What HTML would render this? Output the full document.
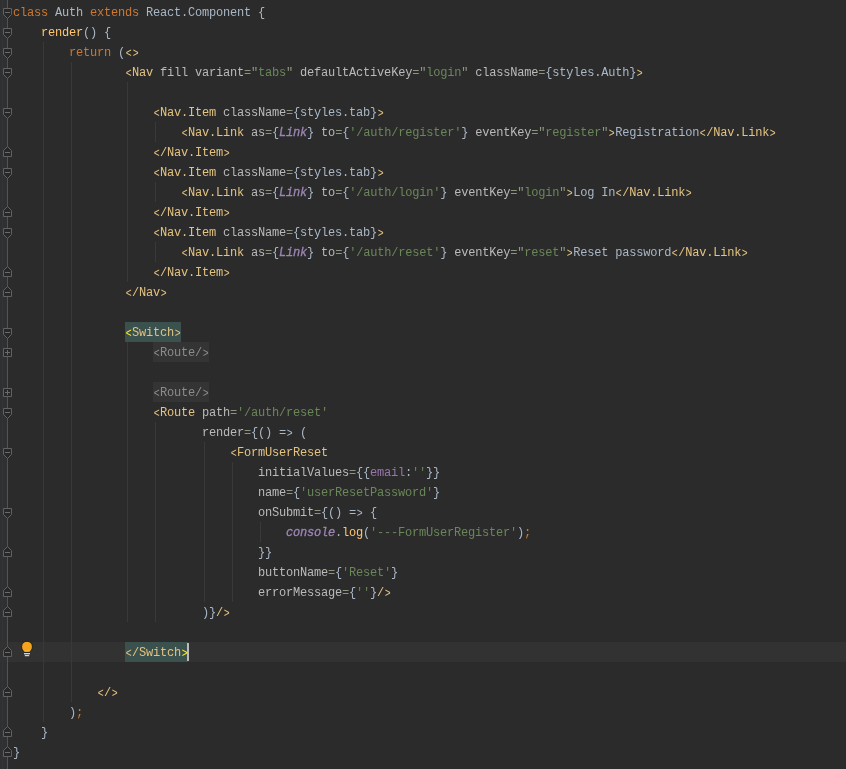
<!DOCTYPE html>
<html><head><meta charset="utf-8">
<style>
html,body{margin:0;padding:0;}
body{width:846px;height:769px;overflow:hidden;background:#2b2b2b;position:relative;font-family:"Liberation Mono",monospace;}
.l{position:absolute;height:20px;line-height:22px;will-change:transform;white-space:pre;font-size:12px;letter-spacing:-0.2px;color:#a9b7c6;z-index:5;}
.ab{font-style:normal;display:inline-block;transform:translateY(1px) scale(0.82,1.08)}
.k{color:#cc7832}
.t{color:#e4c380}
.a{color:#bababa}
.s{color:#6a8759}
.p{color:#a9b7c6}
.f{color:#ffc66d}
.v{color:#9d86b6;font-style:italic;-webkit-text-stroke:0.3px}
.e{color:#9876aa}
.q{color:#8c967f}
.dq{color:#8f9a80}
.sw{color:#e4c380}
.sw1{color:#ffef28}
.rt{color:#8c8c8c}
.hl{position:absolute;height:20px;z-index:3}
.g{position:absolute;width:1px;background:#393939;z-index:2}
.curline{position:absolute;left:0;top:642px;width:846px;height:20px;background:#323232;z-index:1}
.foldline{position:absolute;left:7px;top:0;width:1px;height:769px;background:#535353;z-index:3}
.gutbg{position:absolute;left:0;top:0;width:7px;height:769px;background:#2f3031;z-index:0}
.gutl{position:absolute;left:2px;top:0;width:1px;height:769px;background:#333435;z-index:0}
.fm{position:absolute;left:0;z-index:4}
.caret{position:absolute;left:187px;top:643px;width:2px;height:18px;background:#bbbbbb;z-index:6}
.bulb{position:absolute;left:19px;top:639px;z-index:6}
</style></head><body>
<div class="curline"></div>
<div class="gutbg"></div><div class="gutl"></div>
<div class="foldline"></div>
<div class="g" style="left:43px;top:42px;height:680px"></div>
<div class="g" style="left:71px;top:62px;height:640px"></div>
<div class="g" style="left:127px;top:82px;height:200px"></div>
<div class="g" style="left:127px;top:342px;height:280px"></div>
<div class="g" style="left:155px;top:122px;height:20px"></div>
<div class="g" style="left:155px;top:182px;height:20px"></div>
<div class="g" style="left:155px;top:242px;height:20px"></div>
<div class="g" style="left:155px;top:422px;height:200px"></div>
<div class="g" style="left:204px;top:442px;height:160px"></div>
<div class="g" style="left:232px;top:462px;height:140px"></div>
<div class="g" style="left:260px;top:522px;height:20px"></div>
<svg class="fm" style="top:8px" width="13" height="14" viewBox="0 0 13 14"><path d="M3.5 0.5 H11.5 V6.5 L7.5 10.5 L3.5 6.5 Z" fill="#282828" stroke="#616161" stroke-width="1"/><path d="M5 4.5 H10" stroke="#6b6b6b" stroke-width="1"/></svg>
<svg class="fm" style="top:28px" width="13" height="14" viewBox="0 0 13 14"><path d="M3.5 0.5 H11.5 V6.5 L7.5 10.5 L3.5 6.5 Z" fill="#282828" stroke="#616161" stroke-width="1"/><path d="M5 4.5 H10" stroke="#6b6b6b" stroke-width="1"/></svg>
<svg class="fm" style="top:48px" width="13" height="14" viewBox="0 0 13 14"><path d="M3.5 0.5 H11.5 V6.5 L7.5 10.5 L3.5 6.5 Z" fill="#282828" stroke="#616161" stroke-width="1"/><path d="M5 4.5 H10" stroke="#6b6b6b" stroke-width="1"/></svg>
<svg class="fm" style="top:68px" width="13" height="14" viewBox="0 0 13 14"><path d="M3.5 0.5 H11.5 V6.5 L7.5 10.5 L3.5 6.5 Z" fill="#282828" stroke="#616161" stroke-width="1"/><path d="M5 4.5 H10" stroke="#6b6b6b" stroke-width="1"/></svg>
<svg class="fm" style="top:108px" width="13" height="14" viewBox="0 0 13 14"><path d="M3.5 0.5 H11.5 V6.5 L7.5 10.5 L3.5 6.5 Z" fill="#282828" stroke="#616161" stroke-width="1"/><path d="M5 4.5 H10" stroke="#6b6b6b" stroke-width="1"/></svg>
<svg class="fm" style="top:168px" width="13" height="14" viewBox="0 0 13 14"><path d="M3.5 0.5 H11.5 V6.5 L7.5 10.5 L3.5 6.5 Z" fill="#282828" stroke="#616161" stroke-width="1"/><path d="M5 4.5 H10" stroke="#6b6b6b" stroke-width="1"/></svg>
<svg class="fm" style="top:228px" width="13" height="14" viewBox="0 0 13 14"><path d="M3.5 0.5 H11.5 V6.5 L7.5 10.5 L3.5 6.5 Z" fill="#282828" stroke="#616161" stroke-width="1"/><path d="M5 4.5 H10" stroke="#6b6b6b" stroke-width="1"/></svg>
<svg class="fm" style="top:328px" width="13" height="14" viewBox="0 0 13 14"><path d="M3.5 0.5 H11.5 V6.5 L7.5 10.5 L3.5 6.5 Z" fill="#282828" stroke="#616161" stroke-width="1"/><path d="M5 4.5 H10" stroke="#6b6b6b" stroke-width="1"/></svg>
<svg class="fm" style="top:408px" width="13" height="14" viewBox="0 0 13 14"><path d="M3.5 0.5 H11.5 V6.5 L7.5 10.5 L3.5 6.5 Z" fill="#282828" stroke="#616161" stroke-width="1"/><path d="M5 4.5 H10" stroke="#6b6b6b" stroke-width="1"/></svg>
<svg class="fm" style="top:448px" width="13" height="14" viewBox="0 0 13 14"><path d="M3.5 0.5 H11.5 V6.5 L7.5 10.5 L3.5 6.5 Z" fill="#282828" stroke="#616161" stroke-width="1"/><path d="M5 4.5 H10" stroke="#6b6b6b" stroke-width="1"/></svg>
<svg class="fm" style="top:508px" width="13" height="14" viewBox="0 0 13 14"><path d="M3.5 0.5 H11.5 V6.5 L7.5 10.5 L3.5 6.5 Z" fill="#282828" stroke="#616161" stroke-width="1"/><path d="M5 4.5 H10" stroke="#6b6b6b" stroke-width="1"/></svg>
<svg class="fm" style="top:144px" width="13" height="14" viewBox="0 0 13 14"><path d="M3.5 12.5 H11.5 V6.5 L7.5 2.5 L3.5 6.5 Z" fill="#282828" stroke="#616161" stroke-width="1"/><path d="M5 8.5 H10" stroke="#6b6b6b" stroke-width="1"/></svg>
<svg class="fm" style="top:204px" width="13" height="14" viewBox="0 0 13 14"><path d="M3.5 12.5 H11.5 V6.5 L7.5 2.5 L3.5 6.5 Z" fill="#282828" stroke="#616161" stroke-width="1"/><path d="M5 8.5 H10" stroke="#6b6b6b" stroke-width="1"/></svg>
<svg class="fm" style="top:264px" width="13" height="14" viewBox="0 0 13 14"><path d="M3.5 12.5 H11.5 V6.5 L7.5 2.5 L3.5 6.5 Z" fill="#282828" stroke="#616161" stroke-width="1"/><path d="M5 8.5 H10" stroke="#6b6b6b" stroke-width="1"/></svg>
<svg class="fm" style="top:284px" width="13" height="14" viewBox="0 0 13 14"><path d="M3.5 12.5 H11.5 V6.5 L7.5 2.5 L3.5 6.5 Z" fill="#282828" stroke="#616161" stroke-width="1"/><path d="M5 8.5 H10" stroke="#6b6b6b" stroke-width="1"/></svg>
<svg class="fm" style="top:544px" width="13" height="14" viewBox="0 0 13 14"><path d="M3.5 12.5 H11.5 V6.5 L7.5 2.5 L3.5 6.5 Z" fill="#282828" stroke="#616161" stroke-width="1"/><path d="M5 8.5 H10" stroke="#6b6b6b" stroke-width="1"/></svg>
<svg class="fm" style="top:584px" width="13" height="14" viewBox="0 0 13 14"><path d="M3.5 12.5 H11.5 V6.5 L7.5 2.5 L3.5 6.5 Z" fill="#282828" stroke="#616161" stroke-width="1"/><path d="M5 8.5 H10" stroke="#6b6b6b" stroke-width="1"/></svg>
<svg class="fm" style="top:604px" width="13" height="14" viewBox="0 0 13 14"><path d="M3.5 12.5 H11.5 V6.5 L7.5 2.5 L3.5 6.5 Z" fill="#282828" stroke="#616161" stroke-width="1"/><path d="M5 8.5 H10" stroke="#6b6b6b" stroke-width="1"/></svg>
<svg class="fm" style="top:644px" width="13" height="14" viewBox="0 0 13 14"><path d="M3.5 12.5 H11.5 V6.5 L7.5 2.5 L3.5 6.5 Z" fill="#282828" stroke="#616161" stroke-width="1"/><path d="M5 8.5 H10" stroke="#6b6b6b" stroke-width="1"/></svg>
<svg class="fm" style="top:684px" width="13" height="14" viewBox="0 0 13 14"><path d="M3.5 12.5 H11.5 V6.5 L7.5 2.5 L3.5 6.5 Z" fill="#282828" stroke="#616161" stroke-width="1"/><path d="M5 8.5 H10" stroke="#6b6b6b" stroke-width="1"/></svg>
<svg class="fm" style="top:724px" width="13" height="14" viewBox="0 0 13 14"><path d="M3.5 12.5 H11.5 V6.5 L7.5 2.5 L3.5 6.5 Z" fill="#282828" stroke="#616161" stroke-width="1"/><path d="M5 8.5 H10" stroke="#6b6b6b" stroke-width="1"/></svg>
<svg class="fm" style="top:744px" width="13" height="14" viewBox="0 0 13 14"><path d="M3.5 12.5 H11.5 V6.5 L7.5 2.5 L3.5 6.5 Z" fill="#282828" stroke="#616161" stroke-width="1"/><path d="M5 8.5 H10" stroke="#6b6b6b" stroke-width="1"/></svg>
<svg class="fm" style="top:348px" width="13" height="14" viewBox="0 0 13 14"><path d="M3.5 0.5 H11.5 V8.5 H3.5 Z" fill="#282828" stroke="#616161" stroke-width="1"/><path d="M5 4.5 H10 M7.5 2 V7" stroke="#6b6b6b" stroke-width="1"/></svg>
<svg class="fm" style="top:388px" width="13" height="14" viewBox="0 0 13 14"><path d="M3.5 0.5 H11.5 V8.5 H3.5 Z" fill="#282828" stroke="#616161" stroke-width="1"/><path d="M5 4.5 H10 M7.5 2 V7" stroke="#6b6b6b" stroke-width="1"/></svg>
<div class="l" style="top:2px;left:13px"><span class="k">class </span><span class="p">Auth </span><span class="k">extends </span><span class="p">React.Component {</span></div>
<div class="l" style="top:22px;left:41px"><span class="f">render</span><span class="p">() {</span></div>
<div class="l" style="top:42px;left:69px"><span class="k">return </span><span class="p">(</span><span class="t"><i class="ab">&lt;</i><i class="ab">&gt;</i></span></div>
<div class="l" style="top:62px;left:125px"><span class="t"><i class="ab">&lt;</i>Nav </span><span class="a">fill variant</span><span class="q">=</span><span class="dq">"</span><span class="s">tabs</span><span class="dq">"</span><span class="a"> defaultActiveKey</span><span class="q">=</span><span class="dq">"</span><span class="s">login</span><span class="dq">"</span><span class="a"> className</span><span class="q">=</span><span class="p">{styles.Auth}</span><span class="t"><i class="ab">&gt;</i></span></div>
<div class="l" style="top:102px;left:153px"><span class="t"><i class="ab">&lt;</i>Nav.Item </span><span class="a">className</span><span class="q">=</span><span class="p">{styles.tab}</span><span class="t"><i class="ab">&gt;</i></span></div>
<div class="l" style="top:122px;left:181px"><span class="t"><i class="ab">&lt;</i>Nav.Link </span><span class="a">as</span><span class="q">=</span><span class="p">{</span><span class="v">Link</span><span class="p">} </span><span class="a">to</span><span class="q">=</span><span class="p">{</span><span class="s">'/auth/register'</span><span class="p">} </span><span class="a">eventKey</span><span class="q">=</span><span class="dq">"</span><span class="s">register</span><span class="dq">"</span><span class="t"><i class="ab">&gt;</i></span><span class="p">Registration</span><span class="t"><i class="ab">&lt;</i>/Nav.Link<i class="ab">&gt;</i></span></div>
<div class="l" style="top:142px;left:153px"><span class="t"><i class="ab">&lt;</i>/Nav.Item<i class="ab">&gt;</i></span></div>
<div class="l" style="top:162px;left:153px"><span class="t"><i class="ab">&lt;</i>Nav.Item </span><span class="a">className</span><span class="q">=</span><span class="p">{styles.tab}</span><span class="t"><i class="ab">&gt;</i></span></div>
<div class="l" style="top:182px;left:181px"><span class="t"><i class="ab">&lt;</i>Nav.Link </span><span class="a">as</span><span class="q">=</span><span class="p">{</span><span class="v">Link</span><span class="p">} </span><span class="a">to</span><span class="q">=</span><span class="p">{</span><span class="s">'/auth/login'</span><span class="p">} </span><span class="a">eventKey</span><span class="q">=</span><span class="dq">"</span><span class="s">login</span><span class="dq">"</span><span class="t"><i class="ab">&gt;</i></span><span class="p">Log In</span><span class="t"><i class="ab">&lt;</i>/Nav.Link<i class="ab">&gt;</i></span></div>
<div class="l" style="top:202px;left:153px"><span class="t"><i class="ab">&lt;</i>/Nav.Item<i class="ab">&gt;</i></span></div>
<div class="l" style="top:222px;left:153px"><span class="t"><i class="ab">&lt;</i>Nav.Item </span><span class="a">className</span><span class="q">=</span><span class="p">{styles.tab}</span><span class="t"><i class="ab">&gt;</i></span></div>
<div class="l" style="top:242px;left:181px"><span class="t"><i class="ab">&lt;</i>Nav.Link </span><span class="a">as</span><span class="q">=</span><span class="p">{</span><span class="v">Link</span><span class="p">} </span><span class="a">to</span><span class="q">=</span><span class="p">{</span><span class="s">'/auth/reset'</span><span class="p">} </span><span class="a">eventKey</span><span class="q">=</span><span class="dq">"</span><span class="s">reset</span><span class="dq">"</span><span class="t"><i class="ab">&gt;</i></span><span class="p">Reset password</span><span class="t"><i class="ab">&lt;</i>/Nav.Link<i class="ab">&gt;</i></span></div>
<div class="l" style="top:262px;left:153px"><span class="t"><i class="ab">&lt;</i>/Nav.Item<i class="ab">&gt;</i></span></div>
<div class="l" style="top:282px;left:125px"><span class="t"><i class="ab">&lt;</i>/Nav<i class="ab">&gt;</i></span></div>
<div class="l" style="top:322px;left:125px"><span class="sw1"><i class="ab">&lt;</i></span><span class="sw">Switch<i class="ab">&gt;</i></span></div>
<div class="l" style="top:342px;left:153px"><span class="rt"><i class="ab">&lt;</i>Route/<i class="ab">&gt;</i></span></div>
<div class="l" style="top:382px;left:153px"><span class="rt"><i class="ab">&lt;</i>Route/<i class="ab">&gt;</i></span></div>
<div class="l" style="top:402px;left:153px"><span class="t"><i class="ab">&lt;</i>Route </span><span class="a">path</span><span class="q">=</span><span class="s">'/auth/reset'</span></div>
<div class="l" style="top:422px;left:202px"><span class="a">render</span><span class="q">=</span><span class="p">{() =<i class="ab">&gt;</i> (</span></div>
<div class="l" style="top:442px;left:230px"><span class="t"><i class="ab">&lt;</i>FormUserReset</span></div>
<div class="l" style="top:462px;left:258px"><span class="a">initialValues</span><span class="q">=</span><span class="p">{{</span><span class="e">email</span><span class="p">:</span><span class="s">''</span><span class="p">}}</span></div>
<div class="l" style="top:482px;left:258px"><span class="a">name</span><span class="q">=</span><span class="p">{</span><span class="s">'userResetPassword'</span><span class="p">}</span></div>
<div class="l" style="top:502px;left:258px"><span class="a">onSubmit</span><span class="q">=</span><span class="p">{() =<i class="ab">&gt;</i> {</span></div>
<div class="l" style="top:522px;left:286px"><span class="v">console</span><span class="p">.</span><span class="f">log</span><span class="p">(</span><span class="s">'---FormUserRegister'</span><span class="p">)</span><span class="k">;</span></div>
<div class="l" style="top:542px;left:258px"><span class="p">}}</span></div>
<div class="l" style="top:562px;left:258px"><span class="a">buttonName</span><span class="q">=</span><span class="p">{</span><span class="s">'Reset'</span><span class="p">}</span></div>
<div class="l" style="top:582px;left:258px"><span class="a">errorMessage</span><span class="q">=</span><span class="p">{</span><span class="s">''</span><span class="p">}</span><span class="t">/<i class="ab">&gt;</i></span></div>
<div class="l" style="top:602px;left:202px"><span class="p">)}</span><span class="t">/<i class="ab">&gt;</i></span></div>
<div class="l" style="top:642px;left:125px"><span class="sw"><i class="ab">&lt;</i>/Switch</span><span class="sw1"><i class="ab">&gt;</i></span></div>
<div class="l" style="top:682px;left:97px"><span class="t"><i class="ab">&lt;</i>/<i class="ab">&gt;</i></span></div>
<div class="l" style="top:702px;left:69px"><span class="p">)</span><span class="k">;</span></div>
<div class="l" style="top:722px;left:41px"><span class="p">}</span></div>
<div class="l" style="top:742px;left:13px"><span class="p">}</span></div>
<div class="hl" style="left:125px;top:322px;width:56px;background:#3b514d"></div>
<div class="hl" style="left:153px;top:342px;width:56px;background:#343434"></div>
<div class="hl" style="left:153px;top:382px;width:56px;background:#343434"></div>
<div class="hl" style="left:125px;top:642px;width:63px;background:#3b514d"></div>
<div class="caret"></div>
<svg class="bulb" width="16" height="20" viewBox="0 0 16 20"><path d="M8 2.3 C11.2 2.3 13.4 4.6 13.4 7.7 C13.4 10.2 12 11.6 11 12.9 L5 12.9 C4 11.6 2.6 10.2 2.6 7.7 C2.6 4.6 4.8 2.3 8 2.3 Z" fill="#f5a51d" stroke="#161616" stroke-width="0.9"/><path d="M5.3 12.2 H10.7" stroke="#f3c766" stroke-width="1"/><rect x="5" y="14.1" width="6" height="1.2" fill="#e6e6e6"/><rect x="5.8" y="16.1" width="4.4" height="1.1" fill="#e6e6e6"/></svg>
</body></html>
